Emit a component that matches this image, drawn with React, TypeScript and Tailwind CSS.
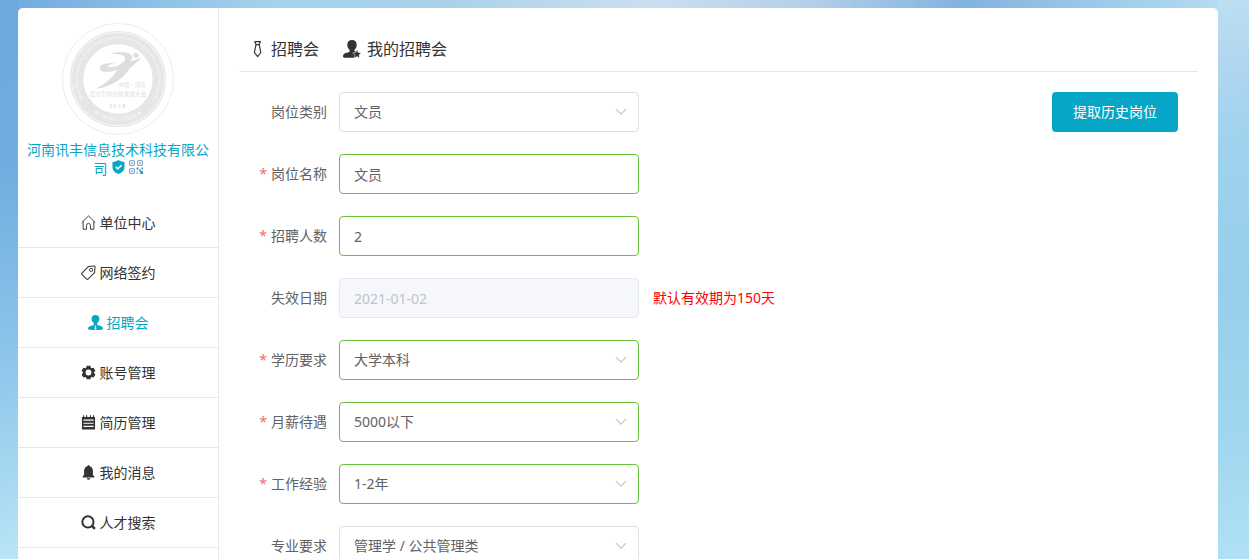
import React, { useId } from "react";

type IconProps = { className?: string };

const svgProps = (className = "size-[15px]") => ({
  viewBox: "0 0 16 16",
  className: `${className} shrink-0`,
  "aria-hidden": true,
  fill: "none",
});

const HomeIcon = ({ className }: IconProps) => (
  <svg {...svgProps(className)}>
    <path d="M.8 8.1 8 1l7.2 7.1M2.300 6.800v8.400h3.600v-4.100a2.100 2.100 0 0 1 4.200 0v4.100h3.600V6.800" stroke="currentColor" strokeWidth="1" strokeLinejoin="round" />
  </svg>
);

const TagIcon = ({ className }: IconProps) => (
  <svg {...svgProps(className)}>
    <path d="M1 8.6 7.8 1.7 14 1a.9.9 0 0 1 1 1l-.5 6.2-7 6.8a1 1 0 0 1-1.400 0L1 10a1 1 0 0 1 0-1.400Z" stroke="currentColor" strokeWidth="1.100" strokeLinejoin="round" />
    <circle cx="10.800" cy="5.200" r="1.700" stroke="currentColor" strokeWidth="1" />
  </svg>
);

const PersonIcon = ({ className }: IconProps) => (
  <svg {...svgProps(className)}>
    <path fill="currentColor" d="M8 0c2.600 0 4.200 1.700 4.200 4.100 0 1.900-.9 3.700-2.400 4.800v1.300c0 .6 1.200.9 2.700 1.300 2.200.6 3.500 1.400 3.500 3.300 0 .8-3.500 1.200-8 1.200s-8-.4-8-1.200c0-1.900 1.300-2.700 3.500-3.300 1.500-.4 2.700-.7 2.700-1.300V8.900C4.700 7.800 3.800 6 3.800 4.100 3.800 1.700 5.400 0 8 0Z" />
    <path fill="#fff" d="m8 11.200 1 .9-.5.800.6 2.100L8 15.800 6.900 15l.6-2.100-.5-.8Z" />
  </svg>
);

const GearIcon = ({ className }: IconProps) => (
  <svg {...svgProps(className)}>
    <path fill="currentColor" fillRule="evenodd" d="M6.100.9h3.800l.6 2 1 .6 2-.5 1.900 3.200-1.500 1.500v.8l1.500 1.500-1.900 3.200-2-.5-1 .6-.6 2H6.100l-.6-2-1-.6-2 .5L.6 10l1.500-1.500v-.8L.6 6.200 2.500 3l2 .5 1-.6ZM8 4.900a3.100 3.100 0 1 0 0 6.200 3.100 3.100 0 0 0 0-6.200Z" />
  </svg>
);

const NotepadIcon = ({ className }: IconProps) => (
  <svg {...svgProps(className)}>
    <path fill="currentColor" fillRule="evenodd" d="M1 2h1.200V.2h1.200V2h2V.2h1.200V2h2.800V.2h1.200V2h2V.2h1.200V2H15v13.500H1ZM2.600 4.900v1.200h10.800V4.900Zm0 3.300v1.200h10.800V8.200Zm0 3.300v1.200h10.800v-1.200Z" />
  </svg>
);

const BellIcon = ({ className }: IconProps) => (
  <svg {...svgProps(className)}>
    <path fill="currentColor" d="M7 1a1 1 0 0 1 2 0c2.300.6 3.700 2.600 3.700 5.200v4.300l1.500 1.800v1H1.800v-1l1.500-1.800V6.200C3.300 3.600 4.700 1.600 7 1ZM6.100 14h3.800c-.2 1-.9 1.600-1.900 1.600S6.300 15 6.100 14Z" />
  </svg>
);

const SearchIcon = ({ className }: IconProps) => (
  <svg {...svgProps(className)}>
    <circle cx="7.400" cy="7.400" r="6" stroke="currentColor" strokeWidth="2.100" />
    <path d="m11.600 11.600 3.200 3.200" stroke="currentColor" strokeWidth="2.600" />
  </svg>
);

const TieIcon = () => (
  <svg viewBox="0 0 14 18" className="h-[18px] w-[14px] shrink-0" aria-hidden="true" fill="none">
    <path d="M3.800 1.700h5.600L8.200 4.600l1.600 7.900-3.200 4.100-3.200-4.100L5 4.600ZM4.800 4.600h3.600" stroke="currentColor" strokeWidth="1.200" strokeLinejoin="round" />
  </svg>
);

const PersonStarIcon = () => (
  <svg viewBox="0 0 18 18" className="size-[18px] shrink-0" aria-hidden="true">
    <path fill="currentColor" d="M9 0c2.900 0 4.700 1.900 4.700 4.700 0 2.100-.8 3.900-2.200 5.100v1.300l1.700.8-2.200 1.400 1.400 1.400-.3 3H1.500C.6 17.700 0 17.300 0 16.500c0-2.200 1.300-3.100 3.700-3.700 1.800-.4 2.800-.7 2.800-1.400V9.800C5.100 8.600 4.300 6.800 4.300 4.700 4.300 1.900 6.100 0 9 0Z" />
    <path fill="currentColor" stroke="#fff" strokeWidth=".5" d="m14 9.800 1.300 2.700 2.900.4-2.100 2.100.5 3-2.600-1.400-2.600 1.400.5-3-2.100-2.100 2.900-.4Z" />
  </svg>
);

const ShieldIcon = () => (
  <svg viewBox="0 0 13 14" className="h-[14px] w-[13px]" role="img" aria-label="已认证">
    <path fill="#07a6c6" d="M6.500 0c1.700 1.200 3.500 1.800 6 1.900v5.300c0 3.300-2.400 5.400-6 6.800C2.900 12.600.5 10.500.5 7.200V1.900C3 1.800 4.800 1.200 6.500 0Z" />
    <path d="m3.700 6.900 2.100 2 3.700-3.700" fill="none" stroke="#fff" strokeWidth="1.600" />
  </svg>
);

const QrIcon = () => (
  <svg viewBox="0 0 14 14" className="size-[14px]" role="img" aria-label="二维码" fill="none">
    <g stroke="#8aaac4" strokeWidth="1.200">
      <rect x=".6" y=".6" width="4.800" height="4.800" rx="1" />
      <rect x="8.600" y=".6" width="4.800" height="4.800" rx="1" />
      <rect x=".6" y="8.600" width="4.800" height="4.800" rx="1" />
    </g>
    <path fill="#7f97b4" d="M2.300 2.300h1.400v1.400H2.300ZM10.300 2.300h1.400v1.400h-1.400ZM2.300 10.300h1.400v1.400H2.300Z" />
    <path fill="#2c9fc2" d="M7.500 7.500h2v2h-2ZM12.500 7.500H14v2h-1.500ZM10 9.500h2v2h-2ZM11.500 11H14v3h-3v-1.500h.5Z" />
    <path fill="#a9bfd2" d="M7.500 11.500H9V14H7.500Z" />
  </svg>
);

function Emblem() {
  const id = useId();
  return (
    <svg viewBox="186 69 336 336" className="size-28" role="img" aria-label="招才引智创新发展大会">
      <defs>
        <path id={`${id}-top`} d="M269 322A120 120 0 1 1 439 322" />
        <path id={`${id}-bottom`} d="M279 338A126 126 0 0 0 429 338" />
      </defs>
      <circle cx="354" cy="237" r="166.500" fill="#fff" stroke="#e4e4e4" strokeWidth="2" />
      <circle cx="354" cy="237" r="142" fill="none" stroke="#e6e6e6" strokeWidth="4" />
      <circle cx="354" cy="237" r="121" fill="none" stroke="#e6e6e6" strokeWidth="34" />
      <g fill="#f7f7f7" fontFamily="Liberation Sans, sans-serif">
        <text fontSize="14">
          <textPath href={`#${id}-top`} startOffset="50%" textAnchor="middle">
            Talent Recruitment &amp; Project Matchmaking Event for Innovation and Development
          </textPath>
        </text>
        <text fontSize="18">
          <textPath href={`#${id}-bottom`} startOffset="50%" textAnchor="middle">★ Henan · China ★</textPath>
        </text>
      </g>
      <g fill="#dedede">
        <circle cx="408" cy="166" r="8" />
        <path d="M330 161c22-7 48-6 60 1 10 6 8 15-2 22 14-2 26-6 37-12-12 16-25 22-35 33-20 30-50 54-104 62 30-16 50-32 66-58-22 8-46 10-51 0-6-12 8-21 44-20-14 4-23 7-20 11 6 5 32 0 47-16 11-13-2-24-42-23Z" />
      </g>
      <g fill="#dedede" fontFamily="Noto Sans CJK SC, sans-serif" textAnchor="middle">
        <text x="396" y="260" fontSize="16">中国·河南</text>
        <text x="354" y="288" fontSize="17">招才引智创新发展大会</text>
        <text x="352" y="324" fontSize="16" fontFamily="Liberation Sans, sans-serif" fontWeight="700">2 0 1 8</text>
      </g>
    </svg>
  );
}

const menu = [
  { text: "单位中心", Icon: HomeIcon },
  { text: "网络签约", Icon: TagIcon },
  { text: "招聘会", Icon: PersonIcon, active: true },
  { text: "账号管理", Icon: GearIcon },
  { text: "简历管理", Icon: NotepadIcon },
  { text: "我的消息", Icon: BellIcon },
  { text: "人才搜索", Icon: SearchIcon },
];

type Field = {
  label: string;
  value: string;
  kind: "select" | "input";
  required?: boolean;
  disabled?: boolean;
  note?: string;
};

const fields: Field[] = [
  { label: "岗位类别", value: "文员", kind: "select" },
  { label: "岗位名称", value: "文员", kind: "input", required: true },
  { label: "招聘人数", value: "2", kind: "input", required: true },
  { label: "失效日期", value: "2021-01-02", kind: "input", disabled: true, note: "默认有效期为150天" },
  { label: "学历要求", value: "大学本科", kind: "select", required: true },
  { label: "月薪待遇", value: "5000以下", kind: "select", required: true },
  { label: "工作经验", value: "1-2年", kind: "select", required: true },
  { label: "专业要求", value: "管理学 / 公共管理类", kind: "select" },
];

function FormRow({ field }: { field: Field }) {
  const id = useId();
  const tone = field.disabled
    ? "border-[#e4e7ed] bg-[#f5f7fa] text-[#c0c4cc]"
    : field.required
      ? "border-[#67c23a] bg-white text-[#606266]"
      : "border-[#dcdfe6] bg-white text-[#606266]";
  const box = `h-10 w-full appearance-none rounded border px-3.5 text-sm outline-none ${tone}`;
  return (
    <div className="flex items-center">
      <label htmlFor={id} className="w-[100px] shrink-0 pr-3 text-right text-sm text-[#606266]">
        {field.required && <span className="mr-1 text-[#f56c6c]">*</span>}
        {field.label}
      </label>
      <div className="relative w-[300px]">
        {field.kind === "select" ? (
          <>
            <select id={id} defaultValue={field.value} className={box}>
              <option>{field.value}</option>
            </select>
            <svg viewBox="0 0 12 8" className="pointer-events-none absolute top-4 right-3 h-2 w-3" aria-hidden="true">
              <path d="m1 1.200 5 5 5-5" fill="none" stroke="#c0c4cc" strokeWidth="1.200" />
            </svg>
          </>
        ) : (
          <input id={id} defaultValue={field.value} disabled={field.disabled} className={box} />
        )}
      </div>
      {field.note && <span className="ml-3.5 text-sm text-[#f00]">{field.note}</span>}
    </div>
  );
}

export default function App() {
  return (
    <div className="h-screen overflow-y-auto bg-[linear-gradient(170deg,#6ca9df_0%,#70ade0_30%,#8fc6ea_65%,#b8e5f7_100%),linear-gradient(170deg,#bcdff3_0%,#b3d7f0_10%,#a0d2ee_25%,#98ceec_50%,#a0d5ee_75%,#b0e1f5_100%),linear-gradient(90deg,#6fa9df_0%,#a5d3ec_22%,#a9d1ea_35%,#cbdff0_52%,#b3cfe9_65%,#82b3de_77%,#a3d0ec_91%,#bcdff3_100%)] bg-[length:18px_100%,31px_100%,100%_100%] bg-[position:left_top,right_top,left_top] bg-no-repeat pt-2 pr-[31px] pl-[18px] font-['Noto_Sans','Noto_Sans_CJK_SC',sans-serif] text-[#333] [scrollbar-width:none]">
      <div className="flex rounded-[5px] bg-white">
        <aside className="w-[201px] shrink-0 border-r border-[#e8e8e8]">
          <div className="flex flex-col items-center px-2 pt-[15px]">
            <Emblem />
            <p className="mt-[5px] h-[58px] text-center text-sm leading-[19px] text-[#07a6c6]">
              河南讯丰信息技术科技有限公司
              <span className="ml-1 inline-flex gap-1">
                <ShieldIcon />
                <QrIcon />
              </span>
            </p>
          </div>
          <nav>
            {menu.map(({ text, Icon, active }) => (
              <a
                key={text}
                href="#"
                className={`flex h-[50px] items-center justify-center gap-1 border-b border-[#e8e8e8] text-sm ${active ? "text-[#07a6c6]" : "text-[#333]"}`}
              >
                <Icon />
                {text}
              </a>
            ))}
          </nav>
        </aside>
        <main className="min-w-0 flex-1 px-5 pb-10">
          <nav className="flex h-16 items-end gap-6 border-b border-[#e8e8e8] pb-2.5 pl-3 text-base">
            <a href="#" className="flex items-center gap-1.5">
              <TieIcon />
              招聘会
            </a>
            <a href="#" className="flex items-center gap-1.5">
              <PersonStarIcon />
              我的招聘会
            </a>
          </nav>
          <form className="flex items-start justify-between pt-5 pr-5" onSubmit={(e) => e.preventDefault()}>
            <div className="flex flex-col gap-[22px]">
              {fields.map((field) => (
                <FormRow key={field.label} field={field} />
              ))}
            </div>
            <button type="button" className="h-10 rounded bg-[#07a6c6] px-[21px] text-sm text-white">
              提取历史岗位
            </button>
          </form>
        </main>
      </div>
    </div>
  );
}
